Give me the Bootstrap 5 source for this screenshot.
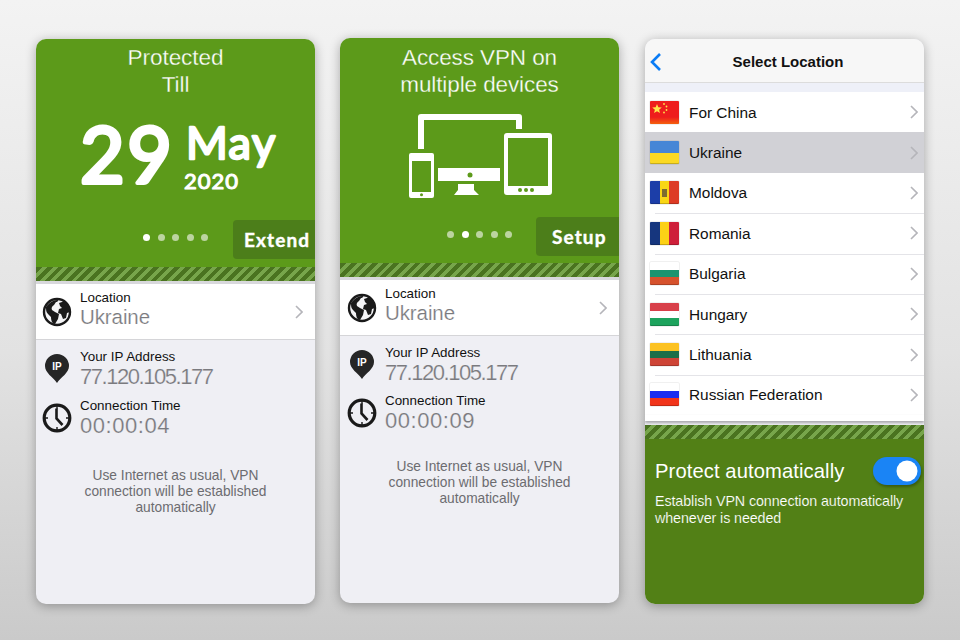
<!DOCTYPE html>
<html lang="en">
<head>
<meta charset="utf-8">
<title>VPN screens</title>
<link href="https://cdn.jsdelivr.net/npm/bootstrap@5.3.0/dist/css/bootstrap.min.css" rel="stylesheet">
<style>
html,body{height:640px;overflow:hidden}
body{background:linear-gradient(#f3f3f3,#e2e2e2 55%,#cacaca);font-family:"Liberation Sans",Arial,sans-serif;color:#111}
.stage{padding:39px 36px 0;gap:25px;width:960px}
.ph{width:279px;height:565px;border-radius:10px;overflow:hidden;background:#efeff4;box-shadow:0 2px 11px rgba(0,0,0,.3);flex:none}
.ph-mid{margin-top:-1px}
.ph-last{margin-left:1px}
.hero{background:#5c9a1a;color:#fff;text-align:center}
.hero1{height:228px;padding-top:5px}
.hero2{height:225px;padding-top:6px}
.title{font-size:22.6px;line-height:27px;letter-spacing:-.1px;-webkit-text-stroke:.3px #5c9a1a}
.hero2 .title{font-size:22.5px}
.datesvg{display:block;margin-top:17px;overflow:visible}
.datesvg text{font-family:"Lato",sans-serif;fill:#fff;stroke:#fff;stroke-linejoin:round;stroke-linecap:round}
.d29{font-size:77px;stroke-width:4px;letter-spacing:2.5px}
.dmay{font-size:45px;stroke-width:2.4px;letter-spacing:1.5px}
.d20{font-size:22px;stroke-width:1.1px;letter-spacing:1px}
.devsvg{display:block;margin:12px auto 0}
.pager{display:grid;grid-template-columns:1fr auto 1fr;align-items:center}
.hero1 .pager{margin-top:20px}
.hero2 .pager{margin-top:17px}
.dots{gap:7.5px;margin-bottom:5px}
.dot{width:7px;height:7px;border-radius:50%;background:#bcd4a0}
.dot.on{background:#fff}
.act{justify-self:end;width:82px;height:39px;background:#4c7e1a;border-radius:4px 0 0 4px;font-family:"Lato",sans-serif;font-weight:700;font-size:19px;letter-spacing:1.1px;line-height:40px;padding-left:11px;text-align:left;white-space:nowrap;-webkit-text-stroke:.4px #fff}
.act2{padding-left:16px;width:83px}
.stripe{height:14px;background:repeating-linear-gradient(-45deg,#4a7320 0 4px,#77a54b 4px 7.5px)}
.gapband{height:3px;background:#d8d8dc}
.locrow{height:56px;background:#fff;border-bottom:1px solid #d5d5d8;padding-left:6px;padding-right:12px}
.locrow .flex-grow-1{margin-top:-4px}
.lbl{font-size:13.4px;line-height:15px;color:#111}
.val{font-size:20.5px;line-height:24px;color:#7a7a7e;letter-spacing:-.1px;-webkit-text-stroke:.2px #efeff4}
.locrow .val{-webkit-text-stroke-color:#fff}
.ipval{font-size:22px;line-height:25px;letter-spacing:-1.45px}
.tmval{font-size:22px;line-height:25px;letter-spacing:.55px}
.info{padding:9px 0 0 6px}
.ph-mid .info,.ph-mid .locrow{padding-left:7px}
.ico{width:30px;flex:none;margin-right:8px}
.inforow{margin-bottom:9px}
.ph-mid .inforow{margin-bottom:8px}
.note{font-size:13.75px;line-height:16px;color:#6c6c70;text-align:center;margin-top:30px;padding:0 28px}
.ph-mid .note{margin-top:26px}
.navtop{height:44px;background:#f7f7f7;border-bottom:1px solid #dcdcdc;font-weight:700;font-size:15px;position:relative;padding:3px 0 0 7px}
.backb{position:absolute;left:4px;top:13px}
.bandtop{height:9px;background:#eef0f8}
.locs{border-radius:0;background:#fff}
.locs .list-group-item{height:40.4px;padding:0 6px 0 5px;border:0;background:transparent;font-size:15.4px;color:#111;display:flex;align-items:center;position:relative}
.locs .list-group-item+.list-group-item::before{content:"";position:absolute;left:10px;right:0;top:0;height:1px;background:#e4e4e8}
.locs .list-group-item.sel{background:#d1d1d6}
.locs .list-group-item.sel+.list-group-item::before,.locs .list-group-item.sel::before{display:none}
.flag{width:29px;height:23px;border-radius:1px;margin-right:10px;flex:none;box-shadow:0 0 1px rgba(0,0,0,.6),inset 0 -1px 0 rgba(0,0,0,.2);display:block}
.f-ua{background:linear-gradient(#4686d6 50%,#fbd923 50%)}
.f-md{background:linear-gradient(#7d6a30,#7d6a30) center/5px 8px no-repeat,linear-gradient(90deg,#1c3ea8 33%,#f9d616 33% 66%,#dd3b25 66%)}
.f-ro{background:linear-gradient(90deg,#16367e 33%,#fcd116 33% 66%,#ce1f3a 66%)}
.f-bg{background:linear-gradient(#fff 33%,#1b9470 33% 66%,#d6522d 66%)}
.f-hu{background:linear-gradient(#d8404a 33%,#fff 33% 66%,#1da35d 66%)}
.f-lt{background:linear-gradient(#fcc222 33%,#1c6e48 33% 66%,#ce4436 66%)}
.f-ru{background:linear-gradient(#fff 33%,#1a2cf0 33% 66%,#f1341a 66%)}
.listend{height:6px;background:#fff;box-shadow:0 2px 3px rgba(0,0,0,.3);position:relative;margin-bottom:4px}
.auto{background:#528016;color:#fff;height:165px;padding:18px 3px 0 10px}
.autot{font-size:20.2px;line-height:26px;letter-spacing:.1px}
.autod{font-size:14.3px;line-height:17px;margin-top:8px;letter-spacing:-.1px;-webkit-text-stroke:.15px #528016}
.form-switch .autosw.form-check-input{width:48px;height:28px;margin:0;background-color:#1a84f5;border:0;box-shadow:1px 2px 3px rgba(0,0,0,.3);flex:none;float:none}
</style>
</head>
<body>
<svg width="0" height="0" class="d-none" aria-hidden="true">
<symbol id="chev" viewBox="0 0 8 14"><path d="M1 1l6 6-6 6" fill="none" stroke="#b5b5ba" stroke-width="1.6"/></symbol>
<symbol id="globe" viewBox="0 0 30 30"><circle cx="15" cy="15" r="13" fill="#f4f4f6" stroke="#1a1a1a" stroke-width="2.4"/><path d="M4 10c3-4 7-7 11-7 2 0 1 2-1 2l-2 3c-2 1-3 3-2 5l3 2 4 2-1 5-3 5c-3 0-4-4-4-7l-3-3c-2-2-2-4-2-7zM17 6l6-2 4 5 1 6-3 1-1 5-3 1-2-5-3-1 1-4 3-1-2-2-1-3z" fill="#1a1a1a"/></symbol>
<symbol id="pin" viewBox="0 0 26 30"><path d="M13 29C9 23 1 19 1 12a12 12 0 0124 0c0 7-8 11-12 17z" fill="#262626"/></symbol>
<symbol id="clock" viewBox="0 0 30 30"><circle cx="15" cy="15" r="12.800" fill="none" stroke="#1a1a1a" stroke-width="3.200"/><path d="M14.500 5.500v10l6 6.500" fill="none" stroke="#1a1a1a" stroke-width="2.600"/><path d="M15 3v3M15 24v3M3 15h3M24 15h3" stroke="#1a1a1a" stroke-width="1.400"/></symbol>
</svg>
<main class="stage d-flex align-items-start">

<section class="ph">
  <div class="hero hero1">
    <div class="title">Protected<br>Till</div>
    <svg class="datesvg" width="279" height="85" viewBox="0 0 279 85">
      <text class="d29" x="44" y="68">29</text>
      <text class="dmay" x="150" y="44">May</text>
      <text class="d20" x="148" y="74">2020</text>
    </svg>
    <div class="pager">
      <span></span>
      <div class="dots d-flex"><i class="dot on"></i><i class="dot"></i><i class="dot"></i><i class="dot"></i><i class="dot"></i></div>
      <div class="act">Extend</div>
    </div>
  </div>
  <div class="stripe"></div><div class="gapband"></div>
  <div class="locrow d-flex align-items-center">
    <svg class="ico" height="30" viewBox="0 0 30 30"><use href="#globe"/></svg>
    <div class="flex-grow-1"><div class="lbl">Location</div><div class="val">Ukraine</div></div>
    <svg width="8" height="14"><use href="#chev"/></svg>
  </div>
  <div class="info">
    <div class="inforow d-flex align-items-center"><svg class="ico" height="30" viewBox="0 0 26 30"><use href="#pin"/><text x="13" y="15.500" text-anchor="middle" font-size="10" font-weight="700" fill="#fff" font-family="Liberation Sans">IP</text></svg><div><div class="lbl">Your IP Address</div><div class="val ipval">77.120.105.177</div></div></div>
    <div class="inforow d-flex align-items-center"><svg class="ico" height="30" viewBox="0 0 30 30"><use href="#clock"/></svg><div><div class="lbl">Connection Time</div><div class="val tmval">00:00:04</div></div></div>
  </div>
  <p class="note">Use Internet as usual, VPN connection will be established automatically</p>
</section>

<section class="ph ph-mid">
  <div class="hero hero2">
    <div class="title">Access VPN on<br>multiple devices</div>
    <svg class="devsvg" width="150" height="90" viewBox="405 110 150 90" fill="#fff">
      <path d="M421 149v-32h98v12" fill="none" stroke="#fff" stroke-width="6" stroke-linejoin="round"/>
      <path fill-rule="evenodd" d="M411 153h21a2 2 0 012 2v41a2 2 0 01-2 2h-21a2 2 0 01-2-2v-41a2 2 0 012-2zm1 8v31h19v-31z"/>
      <circle cx="421.500" cy="194.800" r="1.500" fill="#5c9a1a"/>
      <path fill-rule="evenodd" d="M438 168h62v13h-62zM454 195l4-5v-6h16v6l5 5z"/>
      <circle cx="470" cy="175" r="2.500" fill="#5c9a1a"/>
      <path fill-rule="evenodd" d="M507 133h42a3 3 0 013 3v56a3 3 0 01-3 3h-42a3 3 0 01-3-3v-56a3 3 0 013-3zm1 5v48h40v-48z"/>
      <circle cx="520" cy="190" r="2" fill="#5c9a1a"/><circle cx="526" cy="190" r="2" fill="#5c9a1a"/><circle cx="532" cy="190" r="2" fill="#5c9a1a"/>
    </svg>
    <div class="pager">
      <span></span>
      <div class="dots d-flex"><i class="dot"></i><i class="dot on"></i><i class="dot"></i><i class="dot"></i><i class="dot"></i></div>
      <div class="act act2">Setup</div>
    </div>
  </div>
  <div class="stripe"></div><div class="gapband"></div>
  <div class="locrow d-flex align-items-center">
    <svg class="ico" height="30" viewBox="0 0 30 30"><use href="#globe"/></svg>
    <div class="flex-grow-1"><div class="lbl">Location</div><div class="val">Ukraine</div></div>
    <svg width="8" height="14"><use href="#chev"/></svg>
  </div>
  <div class="info">
    <div class="inforow d-flex align-items-center"><svg class="ico" height="30" viewBox="0 0 26 30"><use href="#pin"/><text x="13" y="15.500" text-anchor="middle" font-size="10" font-weight="700" fill="#fff" font-family="Liberation Sans">IP</text></svg><div><div class="lbl">Your IP Address</div><div class="val ipval">77.120.105.177</div></div></div>
    <div class="inforow d-flex align-items-center"><svg class="ico" height="30" viewBox="0 0 30 30"><use href="#clock"/></svg><div><div class="lbl">Connection Time</div><div class="val tmval">00:00:09</div></div></div>
  </div>
  <p class="note">Use Internet as usual, VPN connection will be established automatically</p>
</section>

<section class="ph ph-last">
  <div class="navtop d-flex align-items-center justify-content-center">
    <svg class="backb" width="14" height="20" viewBox="0 0 14 20"><path d="M11 2L3 10l8 8" fill="none" stroke="#0a7cf5" stroke-width="2.600"/></svg>
    Select Location
  </div>
  <div class="bandtop"></div>
  <div class="list-group locs">
    <div class="list-group-item"><svg class="flag" viewBox="0 0 29 23"><defs><linearGradient id="cn" x1="0" y1="0" x2="0" y2="1"><stop offset=".7" stop-color="#ee1c1c"/><stop offset="1" stop-color="#f4610e"/></linearGradient></defs><rect width="29" height="23" fill="url(#cn)"/><path d="M7 3l1.300 3.300 3.500.200-2.700 2.200.9 3.400L7 10.200l-3 1.900.9-3.400L2.200 6.500l3.500-.2z" fill="#ffe34a"/><g fill="#ffe34a"><circle cx="14" cy="3" r=".9"/><circle cx="16.500" cy="5.500" r=".9"/><circle cx="16.500" cy="9" r=".9"/><circle cx="14" cy="11.500" r=".9"/></g></svg>For China<svg class="ms-auto" width="8" height="14"><use href="#chev"/></svg></div>
    <div class="list-group-item sel"><span class="flag f-ua"></span>Ukraine<svg class="ms-auto" width="8" height="14"><use href="#chev"/></svg></div>
    <div class="list-group-item"><span class="flag f-md"></span>Moldova<svg class="ms-auto" width="8" height="14"><use href="#chev"/></svg></div>
    <div class="list-group-item"><span class="flag f-ro"></span>Romania<svg class="ms-auto" width="8" height="14"><use href="#chev"/></svg></div>
    <div class="list-group-item"><span class="flag f-bg"></span>Bulgaria<svg class="ms-auto" width="8" height="14"><use href="#chev"/></svg></div>
    <div class="list-group-item"><span class="flag f-hu"></span>Hungary<svg class="ms-auto" width="8" height="14"><use href="#chev"/></svg></div>
    <div class="list-group-item"><span class="flag f-lt"></span>Lithuania<svg class="ms-auto" width="8" height="14"><use href="#chev"/></svg></div>
    <div class="list-group-item"><span class="flag f-ru"></span>Russian Federation<svg class="ms-auto" width="8" height="14"><use href="#chev"/></svg></div>
  </div>
  <div class="listend"></div>
  <div class="stripe"></div>
  <div class="auto">
    <div class="d-flex align-items-center justify-content-between">
      <div class="autot">Protect automatically</div>
      <div class="form-check form-switch p-0 m-0 d-flex"><input class="form-check-input autosw" type="checkbox" role="switch" checked aria-label="Protect automatically"></div>
    </div>
    <div class="autod">Establish VPN connection automatically whenever is needed</div>
  </div>
</section>

</main>
<script src="https://cdn.jsdelivr.net/npm/bootstrap@5.3.0/dist/js/bootstrap.bundle.min.js"></script>
</body>
</html>
